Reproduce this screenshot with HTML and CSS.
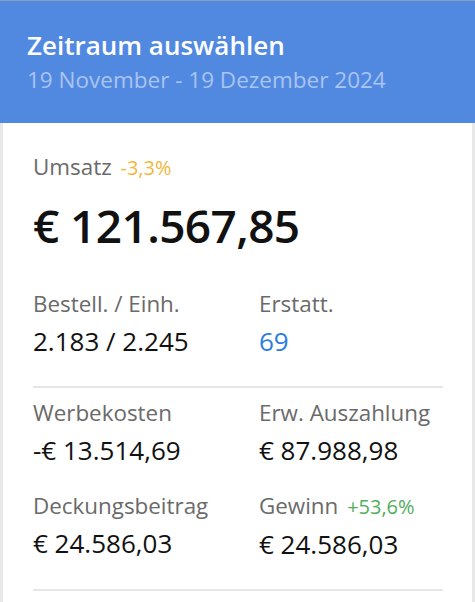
FILE: index.html
```html
<!DOCTYPE html>
<html lang="de">
<head>
    <meta charset="UTF-8">
    <meta name="viewport" content="width=device-width, initial-scale=1.0">
    <title>Zeitraum auswählen</title>
    <link rel="stylesheet" href="styles.css">
</head>
<body>
    <!-- Kopfbereich -->
    <div class="header">
        <div class="header-title">Zeitraum auswählen</div>
        <div class="header-range">19 November - 19 Dezember 2024</div>
    </div>

    <div class="card">
        <div class="revenue">
            <div class="label">Umsatz <span class="trend down">-3,3%</span></div>
            <div class="revenue-value">€ 121.567,85</div>
        </div>

        <div class="metrics">
            <div class="metric">
                <div class="label">Bestell. / Einh.</div>
                <div class="value">2.183 / 2.245</div>
            </div>
            <div class="metric">
                <div class="label">Erstatt.</div>
                <div class="value link">69</div>
            </div>
        </div>

        <hr class="divider">

        <div class="metrics">
            <div class="metric">
                <div class="label">Werbekosten</div>
                <div class="value">-€ 13.514,69</div>
            </div>
            <div class="metric">
                <div class="label">Erw. Auszahlung</div>
                <div class="value">€ 87.988,98</div>
            </div>
            <div class="metric">
                <div class="label">Deckungsbeitrag</div>
                <div class="value">€ 24.586,03</div>
            </div>
            <div class="metric">
                <div class="label">Gewinn <span class="trend up">+53,6%</span></div>
                <div class="value">€ 24.586,03</div>
            </div>
        </div>

        <hr class="divider">
    </div>
</body>
</html>
```

FILE: styles.css
```css
body {
    margin: 0;
    font-family: "Open Sans", "Noto Sans", sans-serif;
    background-color: #ffffff;
    color: #111111;
}
.header {
    background-color: #5289e0;
    border-top: 1px solid #8b9dbf;
    padding: 26px 27px 28px;
}
.header-title {
    color: #ffffff;
    font-size: 26px;
    font-weight: 600;
    line-height: 36px;
}
.header-range {
    color: #a9c4f1;
    font-size: 22.5px;
    line-height: 30px;
    margin-top: 2px;
}
.card {
    border-left: 3px solid #e8e8e8;
    border-right: 3px solid #e8e8e8;
    padding: 29px 29px 20px 30px;
    min-height: 460px;
}
.label {
    color: #6a6a6a;
    font-size: 22.4px;
    line-height: 30px;
}
.trend {
    font-size: 20px;
    margin-left: 3px;
}
.trend.down {
    color: #f4b63a;
}
.trend.up {
    color: #4fae5c;
}
.revenue-value {
    font-size: 46px;
    font-weight: 600;
    letter-spacing: -0.6px;
    line-height: 55px;
    margin-top: 15px;
}
.metrics {
    display: grid;
    grid-template-columns: 226px 1fr;
    row-gap: 24px;
}
.revenue + .metrics {
    margin-top: 36px;
}
.value {
    font-size: 26px;
    line-height: 34px;
    margin-top: 5px;
}
.value.link {
    color: #2b7de3;
}
.divider {
    border: none;
    border-top: 2px solid #e6e6e6;
    margin: 32px 0 10px;
}
.metrics + .divider {
    margin-top: 28px;
}
```
